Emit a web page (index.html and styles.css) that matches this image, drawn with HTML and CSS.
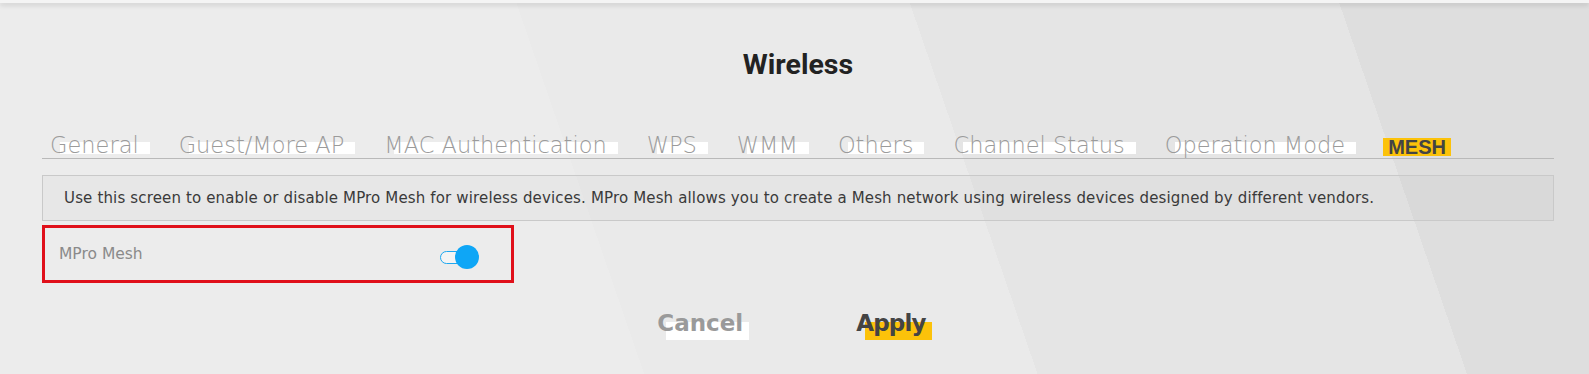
FILE: index.html
```html
<!DOCTYPE html>
<html lang="en">
<head>
<meta charset="utf-8">
<title>Wireless</title>
<link rel="stylesheet" href="styles.css">
</head>
<body>
<div class="topbar"></div>
<main class="page">
  <h1 class="title">Wireless</h1>
  <nav class="tabs">
    <a class="tab">General</a>
    <a class="tab">Guest/More AP</a>
    <a class="tab">MAC Authentication</a>
    <a class="tab">WPS</a>
    <a class="tab">WMM</a>
    <a class="tab">Others</a>
    <a class="tab">Channel Status</a>
    <a class="tab">Operation Mode</a>
    <a class="tab active">MESH</a>
  </nav>
  <div class="desc">Use this screen to enable or disable MPro Mesh for wireless devices. MPro Mesh allows you to create a Mesh network using wireless devices designed by different vendors.</div>
  <div class="field-row">
    <span class="field-label">MPro Mesh</span>
    <span class="switch"><span class="track"></span><span class="knob"></span></span>
  </div>
  <div class="actions">
    <button class="btn cancel">Cancel</button>
    <button class="btn apply">Apply</button>
  </div>
</main>
</body>
</html>
```
FILE: styles.css
```css
html, body {
  margin: 0;
  padding: 0;
  height: 100%;
}
body {
  overflow: hidden;
  font-family: "DejaVu Sans", "Liberation Sans", sans-serif;
  background: linear-gradient(71deg,
    #ececec 0 37.5%,
    #eaeaea 37.5% 60.4%,
    #e5e5e5 60.4% 85.4%,
    #dedede 85.4% 100%);
}
.topbar {
  height: 3px;
  background: #f4f4f4;
  box-shadow: 0 2px 5px rgba(0, 0, 0, 0.16);
}
.page {
  margin: 0 35px 0 42px;
}
.title {
  margin: 45px 0 0;
  text-align: center;
  font-family: Roboto, "Liberation Sans", sans-serif;
  font-weight: 700;
  font-size: 28.5px;
  line-height: 34px;
  color: #222;
}
.tabs {
  margin-top: 50px;
  padding-left: 8px;
  display: flex;
  align-items: flex-end;
  gap: 40px;
  border-bottom: 1px solid #b9b9b9;
}
.tab {
  position: relative;
  z-index: 0;
  font-size: 22.5px;
  font-weight: 200;
  line-height: 26px;
  color: #9b9b9b;
  white-space: nowrap;
}
.tab::after {
  content: "";
  position: absolute;
  z-index: -1;
  left: 10px;
  right: -11px;
  top: 10px;
  height: 12px;
  background: #ffffff;
}
.tab.active {
  font-family: "Liberation Sans", sans-serif;
  font-weight: 700;
  font-size: 20px;
  line-height: 18px;
  color: #444;
  background: #fcc20a;
  padding: 0 5px;
  margin-bottom: 2px;
  margin-left: -2px;
}
.tab.active::after {
  display: none;
}
.desc {
  margin-top: 16px;
  border: 1px solid #c9c9c9;
  background: rgba(0, 0, 0, 0.018);
  padding: 0 21px;
  height: 44px;
  line-height: 44px;
  font-size: 15px;
  letter-spacing: 0.15px;
  color: #3a3a3a;
  white-space: nowrap;
}
.field-row {
  margin-top: 4px;
  width: 452px;
  height: 52px;
  border: 3px solid #e0101a;
  display: flex;
  align-items: center;
  padding-left: 14px;
  box-sizing: content-box;
}
.field-label {
  width: 381px;
  font-size: 15.5px;
  color: #8a8a8a;
}
.switch {
  display: flex;
  align-items: center;
  margin-top: 6px;
}
.track {
  width: 28px;
  height: 11px;
  border: 1.5px solid #1ea8f0;
  border-radius: 8px;
  background: #f4f4f4;
}
.knob {
  width: 24px;
  height: 24px;
  border-radius: 50%;
  background: #0ea6f6;
  margin-left: -15px;
}
.actions {
  margin-top: 26px;
  padding-right: 13px;
  display: flex;
  justify-content: center;
  gap: 113px;
}
.btn {
  position: relative;
  z-index: 0;
  border: 0;
  background: none;
  padding: 0;
  font-family: "DejaVu Sans", sans-serif;
  font-weight: 700;
  font-size: 23px;
  line-height: 28px;
  cursor: pointer;
}
.btn::after {
  content: "";
  position: absolute;
  z-index: -1;
  left: 9px;
  right: -6px;
  top: 13px;
  height: 18px;
}
.cancel {
  color: #9a9a9a;
}
.cancel::after {
  background: #ffffff;
}
.apply {
  color: #444;
  letter-spacing: -0.8px;
}
.apply::after {
  background: #fcc20a;
}
```
